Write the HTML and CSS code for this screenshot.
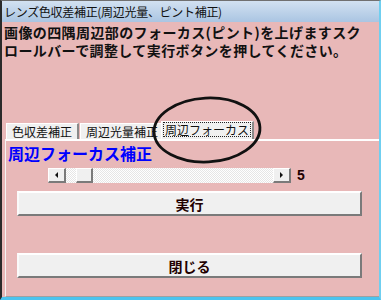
FILE: index.html
```html
<!DOCTYPE html>
<html>
<head>
<meta name="viewport" content="width=device-width, initial-scale=1">
<link rel="stylesheet" href="styles.css">
</head>
<body>

<div class="window">
  <div class="titlebar">レンズ色収差補正(周辺光量、ピント補正)</div>
  <div class="client">
    <p class="intro">画像の四隅周辺部のフォーカス(ピント)を上げますスクロールバーで調整して実行ボタンを押してください。</p>

    <div class="tabs">
      <div class="tab">色収差補正</div>
      <div class="tab">周辺光量補正</div>
      <div class="tab active"><span class="focus">周辺フォーカス</span></div>
    </div>

    <div class="panel">
      <h2 class="heading">周辺フォーカス補正</h2>
      <div class="scroll_row">
        <div class="scrollbar">
          <div class="arrow"><span class="tri left"></span></div>
          <div class="track">
            <div class="thumb"></div>
          </div>
          <div class="arrow"><span class="tri right"></span></div>
        </div>
        <span class="value">5</span>
      </div>
      <button class="btn run">実行</button>
      <button class="btn close">閉じる</button>
    </div>

    <!-- hand drawn mark round the third tab -->
    <svg class="mark" width="120" height="72" viewBox="0 0 120 72">
      <ellipse cx="60" cy="36" rx="53" ry="32" fill="none" stroke="#111" stroke-width="2.8" transform="rotate(-3 60 36)"/>
    </svg>
  </div>
</div>

</body>
</html>
```

FILE: styles.css
```css
* {
  box-sizing: border-box;
}

body {
  margin: 0;
  width: 381px;
  height: 300px;
  overflow: hidden;
  font-family: "Noto Sans CJK JP", "Liberation Sans", sans-serif;
}

.window {
  width: 381px;
  height: 300px;
  display: flex;
  flex-direction: column;
  border-left: 2px solid #2a2a2a;
  border-top: 1px solid #707070;
  border-right: 2px solid #6fcff0;
  border-bottom: 3px solid #4cc3ee;
  background-color: #e8b8b8;
}

.titlebar {
  height: 21px;
  padding: 0 0 0 2px;
  font-size: 12px;
  line-height: 21px;
  color: #111;
  letter-spacing: -0.3px;
  background: linear-gradient(#d2e1f1, #aac5e2);
  white-space: nowrap;
}

.client {
  position: relative;
  flex: 1;
  display: flex;
  flex-direction: column;
}

.intro {
  margin: 0;
  padding: 1px 0 0 2px;
  font-size: 14px;
  font-weight: bold;
  line-height: 18px;
  color: #111;
  letter-spacing: 0.4px;
  width: 366px;
}

.tabs {
  display: flex;
  align-items: flex-end;
  margin-top: 62px;
  padding-left: 4px;
  height: 18px;
}

.tab {
  height: 16px;
  padding: 0 5px;
  font-size: 12px;
  line-height: 15px;
  color: #111;
  background-color: #f0f0f0;
  border-top: 1px solid #fff;
  border-left: 1px solid #fff;
  border-right: 2px solid #8a8a8a;
  margin-right: 1px;
  white-space: nowrap;
}

.tab:nth-child(2) {
  width: 81px;
  overflow: hidden;
  padding-right: 0;
  margin-right: 0;
  border-right: none;
}

.tab.active {
  height: 18px;
  padding: 1px 2px 0 2px;
  margin-right: 0;
  position: relative;
  z-index: 1;
}

.focus {
  display: block;
  padding: 0 1px;
  line-height: 13px;
  outline: 1px dotted #222;
}

.panel {
  flex: 1;
  margin-left: 3px;
  border-top: 2px solid #fff;
  border-left: 1px solid #f4f4f4;
  border-bottom: 1px solid #a0a0a0;
  display: flex;
  flex-direction: column;
}

.heading {
  margin: 0;
  padding: 1px 0 0 2px;
  font-size: 16px;
  line-height: 22px;
  font-weight: bold;
  color: #0000ff;
}

.scroll_row {
  display: flex;
  align-items: center;
  gap: 6px;
  margin: 3px 0 0 42px;
}

.scrollbar {
  display: flex;
  width: 243px;
  height: 15px;
}

.arrow {
  width: 18px;
  height: 15px;
  display: flex;
  align-items: center;
  justify-content: center;
  background-color: #f0f0f0;
  border-top: 1px solid #fff;
  border-left: 1px solid #fff;
  border-right: 2px solid #7a7a7a;
  border-bottom: 2px solid #7a7a7a;
}

.tri {
  width: 0;
  height: 0;
  border-top: 3px solid transparent;
  border-bottom: 3px solid transparent;
}

.tri.left {
  border-right: 3px solid #111;
}

.tri.right {
  border-left: 3px solid #111;
}

.track {
  flex: 1;
  padding-left: 10px;
  background: repeating-conic-gradient(#fff 0 25%, #e6e6e6 0 50%) 0 0 / 2px 2px;
}

.thumb {
  width: 17px;
  height: 15px;
  background-color: #f0f0f0;
  border-top: 1px solid #fff;
  border-left: 1px solid #fff;
  border-right: 2px solid #7a7a7a;
  border-bottom: 2px solid #7a7a7a;
}

.value {
  font-family: "Liberation Sans", sans-serif;
  font-size: 14px;
  font-weight: bold;
  color: #200;
}

.btn {
  width: 345px;
  height: 25px;
  margin-left: 11px;
  padding: 0;
  font-family: "Noto Sans CJK JP", sans-serif;
  font-size: 14px;
  font-weight: bold;
  color: #200;
  background-color: #f0f0f0;
  border-top: 2px solid #fff;
  border-left: 2px solid #fafafa;
  border-right: 2px solid #7a7a7a;
  border-bottom: 2px solid #7a7a7a;
}

.run {
  margin-top: 8px;
}

.close {
  margin-top: 37px;
}

.mark {
  position: absolute;
  left: 145px;
  top: 72px;
  z-index: 2;
}
```
